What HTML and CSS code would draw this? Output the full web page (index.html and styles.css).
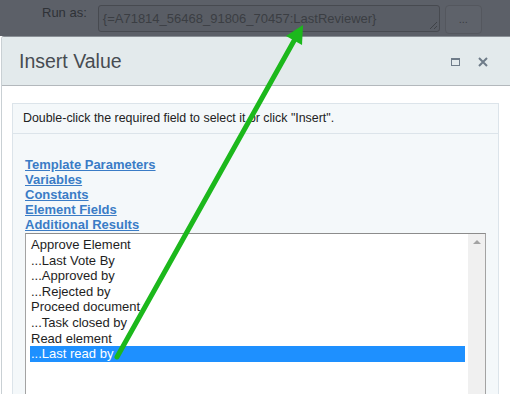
FILE: index.html
```html
<!DOCTYPE html>
<html lang="en">
<head>
  <meta charset="UTF-8">
  <title>Insert Value</title>
  <link rel="stylesheet" href="styles.css">
</head>
<body>
  <div class="topbar">
    <span class="runas-label">Run as:</span>
    <div class="runas-field">{=A71814_56468_91806_70457:LastReviewer}<span class="grip"></span></div>
    <div class="runas-btn">...</div>
  </div>

  <div class="dialog">
    <div class="dlg-head">
      <span class="dlg-title">Insert Value</span>
      <span class="icon-max"></span>
      <svg class="icon-close" width="10" height="10" viewBox="0 0 10 10">
        <path d="M1 1 L9 9 M9 1 L1 9" stroke="#6f7c89" stroke-width="2"/>
      </svg>
    </div>
    <div class="dlg-body">
      <div class="panel">
        <div class="hint">Double-click the required field to select it or click "Insert".</div>
        <div class="links">
          <a href="#">Template Parameters</a>
          <a href="#">Variables</a>
          <a href="#">Constants</a>
          <a href="#">Element Fields</a>
          <a href="#">Additional Results</a>
        </div>
        <div class="listbox">
          <ul class="items">
            <li>Approve Element</li>
            <li>...Last Vote By</li>
            <li>...Approved by</li>
            <li>...Rejected by</li>
            <li>Proceed document</li>
            <li>...Task closed by</li>
            <li>Read element</li>
            <li class="selected">...Last read by</li>
          </ul>
          <div class="scrollbar"><span class="arrow-up"></span></div>
        </div>
      </div>
    </div>
  </div>

  <svg class="pointer" width="510" height="394" viewBox="0 0 510 394">
    <line x1="117" y1="357" x2="295" y2="39" stroke="#1cb81c" stroke-width="5" stroke-linecap="round"/>
    <polygon points="303,25 286,36 302,45" fill="#1cb81c"/>
  </svg>
</body>
</html>
```

FILE: styles.css
```css
body {
  margin: 0;
  background: #ffffff;
  font-family: "Liberation Sans", Arial, sans-serif;
  width: 510px;
  height: 394px;
  overflow: hidden;
  position: relative;
}

.topbar {
  height: 36px;
  background: #5c6068;
  display: flex;
  align-items: flex-start;
  box-sizing: border-box;
  padding-top: 5px;
}

.runas-label {
  margin-left: 42px;
  font-size: 13px;
  color: #2f3237;
}

.runas-field {
  position: relative;
  margin-left: 11px;
  width: 342px;
  height: 27px;
  box-sizing: border-box;
  border: 1px solid #474a50;
  border-radius: 3px;
  background: #595d65;
  color: #3b3e43;
  font-size: 13px;
  padding: 5px 0 0 4px;
}

.grip {
  position: absolute;
  right: 2px;
  bottom: 2px;
  width: 7px;
  height: 7px;
  background: linear-gradient(135deg, transparent 45%, #3f4247 45%, #3f4247 55%, transparent 55%, transparent 75%, #3f4247 75%, #3f4247 85%, transparent 85%);
}

.runas-btn {
  margin-left: 5px;
  width: 37px;
  height: 29px;
  box-sizing: border-box;
  border: 1px solid #54575e;
  border-radius: 4px;
  background: #5e626a;
  color: #3b3e43;
  font-size: 11px;
  text-align: center;
  line-height: 26px;
}

.dialog {
  margin-left: 1px;
  height: 357px;
  overflow: hidden;
  border-top: 1px solid #8a9096;
  border-left: 1px solid #c9d0d4;
  border-radius: 3px 0 0 0;
  background: #ffffff;
}

.dlg-head {
  height: 48px;
  background: #e3eaec;
  border-bottom: 1px solid #b3b8bc;
  display: flex;
  align-items: center;
  padding-left: 17px;
}

.dlg-title {
  font-size: 19.5px;
  color: #474c52;
  flex: 1;
}

.icon-max {
  width: 9px;
  height: 8px;
  box-sizing: border-box;
  border: 1px solid #6f7c89;
  border-top-width: 2px;
  margin-right: 18px;
  margin-top: 2px;
}

.icon-close {
  margin-right: 22px;
  margin-top: 2px;
}

.dlg-body {
  padding: 17px 11px 0 10px;
}

.panel {
  background: #f4f8fa;
  border: 1px solid #dce4ea;
  height: 320px;
}

.hint {
  font-size: 12.4px;
  color: #222;
  padding: 7px 10px 0 10px;
  height: 22px;
  border-bottom: 1px solid #dce4ea;
}

.links {
  padding: 23px 0 0 12px;
  display: flex;
  flex-direction: column;
  align-items: flex-start;
}

.links a {
  font-size: 13px;
  font-weight: bold;
  line-height: 15px;
  color: #3a7cc6;
  text-decoration: underline;
}

.listbox {
  margin: 1px 0 0 12px;
  width: 461px;
  height: 180px;
  box-sizing: border-box;
  border: 1px solid #a3a3a3;
  border-top-color: #8c8c8c;
  background: #ffffff;
  display: flex;
}

.items {
  list-style: none;
  margin: 0;
  padding: 3px 3px 0 4px;
  flex: 1;
}

.items li {
  font-size: 13px;
  line-height: 15.6px;
  color: #1e1e1e;
  padding-left: 1px;
}

.items li.selected {
  background: #1e90ff;
  color: #ffffff;
  height: 16px;
}

.scrollbar {
  width: 17px;
  background: #f0f0f0;
  position: relative;
}

.arrow-up {
  position: absolute;
  left: 5px;
  top: 6px;
  width: 0;
  height: 0;
  border-left: 4px solid transparent;
  border-right: 4px solid transparent;
  border-bottom: 4px solid #a3a3a3;
}

.pointer {
  position: absolute;
  left: 0;
  top: 0;
  pointer-events: none;
}
```
